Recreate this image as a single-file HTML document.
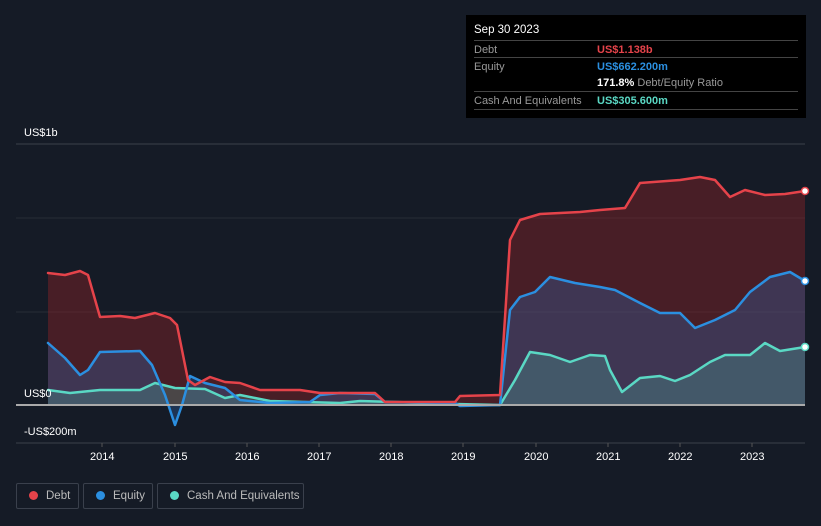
<!DOCTYPE html>
<html><head><meta charset="utf-8"><style>
html,body{margin:0;background:#151b26;width:821px;height:526px;overflow:hidden;font-family:"Liberation Sans",sans-serif;position:relative}
.tt{position:absolute;left:466px;top:15px;width:340px;height:103px;background:#000;color:#ddd;font-size:11px}
.tt .h{position:absolute;left:8px;top:9px;color:#fff;font-size:11.5px}
.row{position:absolute;left:8px;width:324px;border-top:1px solid #444;height:17px}
.row span{position:absolute;top:3px;white-space:nowrap}
.lbl{left:0;color:#999}.val{left:123px}
.leg{position:absolute;top:483px;height:26px;border:1px solid #3a404c;border-radius:2px;color:#bbb;font-size:11.5px;line-height:24px;box-sizing:border-box;white-space:nowrap}
.leg i{display:inline-block;width:9px;height:9px;border-radius:50%;margin:0 8px 0 12px;vertical-align:-1px}
.ax{position:absolute;color:#fff;font-size:11px}
</style></head><body>
<svg width="821" height="526" style="position:absolute;left:0;top:0">
<line x1="16" y1="144" x2="805" y2="144" stroke="#3a404a"/>
<line x1="16" y1="218" x2="805" y2="218" stroke="#262c36"/>
<line x1="16" y1="312" x2="805" y2="312" stroke="#262c36"/>
<line x1="16" y1="443" x2="805" y2="443" stroke="#3a404a"/>
<polygon fill="rgba(150,35,40,0.4)" points="48,405 48,273 65,275 80,271 88,275 100,317 120,316 135,318 155,313 170,318 177,325 188,380 195,385 210,377 225,382 240,383 260,390 300,390 320,393 375,393 385,402 455,402 460,396 500,395 510,240 520,220 540,214 580,212 600,210 625,208 640,183 680,180 700,177 715,180 730,197 745,190 765,195 785,194 805,191 805,405"/>
<polygon fill="rgba(50,100,170,0.35)" points="48,405 48,343 65,358 80,375 88,370 100,352 140,351 152,365 165,395 175,425 182,405 190,376 205,383 225,388 240,400 270,403 310,402 320,395 340,393 375,394 385,402 455,403 460,406 500,405 510,310 520,297 535,292 550,277 575,283 600,287 615,290 640,303 660,313 680,313 695,328 715,320 735,310 750,292 770,277 790,272 805,281 805,405"/>
<polygon fill="rgba(80,190,170,0.25)" points="48,405 48,390 70,393 100,390 140,390 155,383 175,388 205,389 225,398 240,395 270,401 340,403 360,401 430,403 455,404 500,405 515,380 530,352 550,355 570,362 590,355 605,356 610,370 622,392 640,378 660,376 675,381 690,375 710,362 725,355 750,355 765,343 780,351 805,347 805,405"/>
<g fill="none" stroke-width="2.5" stroke-linejoin="round" stroke-linecap="round">
<polyline stroke="#5ad8c4" points="48,390 70,393 100,390 140,390 155,383 175,388 205,389 225,398 240,395 270,401 340,403 360,401 430,403 455,404 500,405 515,380 530,352 550,355 570,362 590,355 605,356 610,370 622,392 640,378 660,376 675,381 690,375 710,362 725,355 750,355 765,343 780,351 805,347"/>
<polyline stroke="#2b8fe0" points="48,343 65,358 80,375 88,370 100,352 140,351 152,365 165,395 175,425 182,405 190,376 205,383 225,388 240,400 270,403 310,402 320,395 340,393 375,394 385,402 455,403 460,406 500,405 510,310 520,297 535,292 550,277 575,283 600,287 615,290 640,303 660,313 680,313 695,328 715,320 735,310 750,292 770,277 790,272 805,281"/>
<polyline stroke="#e5434a" points="48,273 65,275 80,271 88,275 100,317 120,316 135,318 155,313 170,318 177,325 188,380 195,385 210,377 225,382 240,383 260,390 300,390 320,393 375,393 385,402 455,402 460,396 500,395 510,240 520,220 540,214 580,212 600,210 625,208 640,183 680,180 700,177 715,180 730,197 745,190 765,195 785,194 805,191"/>
</g>
<line x1="16" y1="405" x2="805" y2="405" stroke="#aaa" stroke-width="2"/>
<circle cx="805" cy="191" r="3.5" fill="#fff" stroke="#e5434a" stroke-width="1.5"/>
<circle cx="805" cy="281" r="3.5" fill="#fff" stroke="#2b8fe0" stroke-width="1.5"/>
<circle cx="805" cy="347" r="3.5" fill="#fff" stroke="#5ad8c4" stroke-width="1.5"/>
<g stroke="#555"><line x1="102" y1="443" x2="102" y2="447"/><line x1="175" y1="443" x2="175" y2="447"/><line x1="247" y1="443" x2="247" y2="447"/><line x1="319" y1="443" x2="319" y2="447"/><line x1="391" y1="443" x2="391" y2="447"/><line x1="463" y1="443" x2="463" y2="447"/><line x1="536" y1="443" x2="536" y2="447"/><line x1="608" y1="443" x2="608" y2="447"/><line x1="680" y1="443" x2="680" y2="447"/><line x1="752" y1="443" x2="752" y2="447"/></g>
</svg>
<div class="ax" style="left:24px;top:127px">US$1b</div>
<div class="ax" style="left:24px;top:388px">US$0</div>
<div class="ax" style="left:24px;top:426px">-US$200m</div>
<div class="ax" style="left:90px;top:451px">2014</div><div class="ax" style="left:163px;top:451px">2015</div><div class="ax" style="left:235px;top:451px">2016</div><div class="ax" style="left:307px;top:451px">2017</div><div class="ax" style="left:379px;top:451px">2018</div><div class="ax" style="left:451px;top:451px">2019</div><div class="ax" style="left:524px;top:451px">2020</div><div class="ax" style="left:596px;top:451px">2021</div><div class="ax" style="left:668px;top:451px">2022</div><div class="ax" style="left:740px;top:451px">2023</div>
<div class="tt"><div class="h">Sep 30 2023</div>
<div class="row" style="top:25px"><span class="lbl">Debt</span><span class="val" style="color:#e5434a;font-weight:bold">US$1.138b</span></div>
<div class="row" style="top:42px"><span class="lbl">Equity</span><span class="val" style="color:#2b8fe0;font-weight:bold">US$662.200m</span></div>
<div class="row" style="top:59px;border:none"><span class="val" style="color:#fff;font-weight:bold">171.8% <b style="color:#999;font-weight:normal">Debt/Equity Ratio</b></span></div>
<div class="row" style="top:76px"><span class="lbl">Cash And Equivalents</span><span class="val" style="color:#5ad8c4;font-weight:bold">US$305.600m</span></div>
<div class="row" style="top:94px;height:0"></div>
</div>
<div class="leg" style="left:16px;width:63px"><i style="background:#e5434a"></i>Debt</div>
<div class="leg" style="left:83px;width:70px"><i style="background:#2b8fe0"></i>Equity</div>
<div class="leg" style="left:157px;width:147px"><i style="background:#5ad8c4"></i>Cash And Equivalents</div>
</body></html>
